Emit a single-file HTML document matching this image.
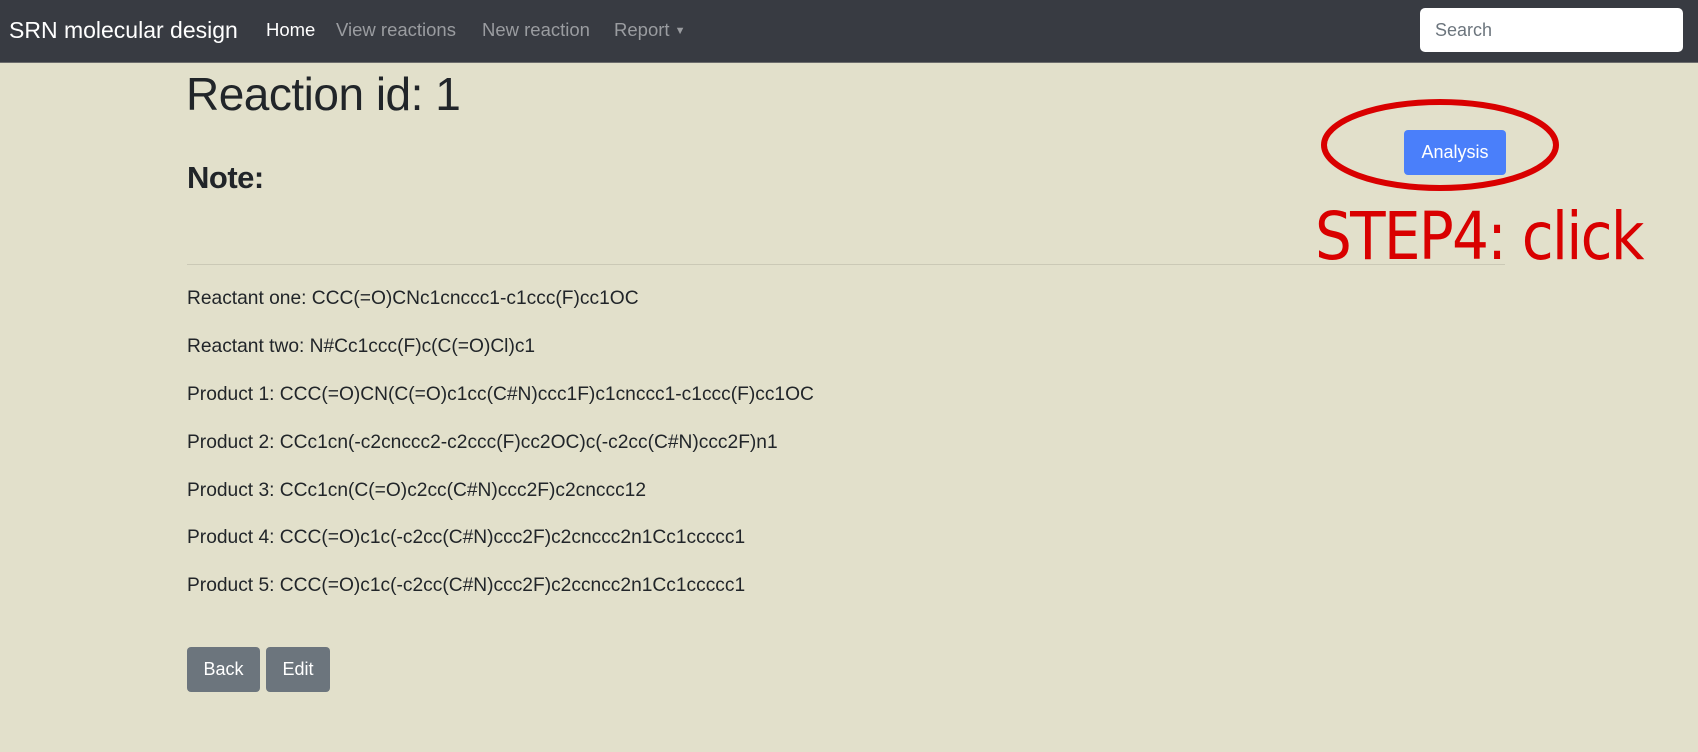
<!DOCTYPE html>
<html><head><meta charset="utf-8"><style>
*{margin:0;padding:0;box-sizing:border-box}
body{width:1698px;height:752px;background:#e2e0cb;font-family:"Liberation Sans",sans-serif;color:#212529;position:relative;overflow:hidden}
.nav{position:absolute;left:0;top:0;width:1698px;height:63px;background:#383b42;border-bottom:1px solid #6b6c6c}
.nav span{position:absolute;top:19px;font-size:18.5px;color:#9a9ca0}
.brand{left:9px;font-size:23px!important;color:#fff!important;top:17px!important}
.search{position:absolute;left:1420px;top:8px;width:263px;height:44px;background:#fff;border-radius:5px;font-size:18px;color:#6c757d;padding:12px 0 0 15px}
.abs{position:absolute}
h1{position:absolute;left:186px;top:67px;font-size:46px;font-weight:normal;letter-spacing:-0.5px}
h2{position:absolute;left:187px;top:160px;font-size:31px;font-weight:bold;letter-spacing:-0.5px}
.hr{position:absolute;left:187px;top:264px;width:1318px;height:1px;background:#cbc9b6}
.t{position:absolute;left:187px;font-size:19.2px}
.btn{position:absolute;top:647px;height:45px;background:#6c757d;color:#fff;border-radius:4px;font-size:18px;text-align:center;line-height:45px}
</style></head><body>
<div class="nav">
<span class="brand">SRN molecular design</span>
<span style="left:266px;color:#fff">Home</span>
<span style="left:336px">View reactions</span>
<span style="left:482px">New reaction</span>
<span style="left:614px">Report <span style="position:static;font-size:11px;vertical-align:2px">▼</span></span>
<div class="search">Search</div>
</div>
<h1>Reaction id: 1</h1>
<h2>Note:</h2>
<div class="abs" style="left:1404px;top:130px;width:102px;height:45px;background:#4a7ffa;border-radius:4px;color:#fff;font-size:18px;text-align:center;line-height:45px">Analysis</div>
<svg class="abs" style="left:1315px;top:95px" width="250" height="100"><ellipse cx="125" cy="50" rx="116" ry="43" fill="none" stroke="#d90000" stroke-width="6"/></svg>
<div class="abs" style="left:1315px;top:198px;font-size:66px;color:#d90000;font-family:'DejaVu Sans',sans-serif;letter-spacing:-2px;transform:scaleX(0.88);transform-origin:left">STEP4: click</div>
<div class="hr"></div>
<div class="t" style="top:288px">Reactant one: CCC(=O)CNc1cnccc1-c1ccc(F)cc1OC</div>
<div class="t" style="top:336px">Reactant two: N#Cc1ccc(F)c(C(=O)Cl)c1</div>
<div class="t" style="top:384px">Product 1: CCC(=O)CN(C(=O)c1cc(C#N)ccc1F)c1cnccc1-c1ccc(F)cc1OC</div>
<div class="t" style="top:432px">Product 2: CCc1cn(-c2cnccc2-c2ccc(F)cc2OC)c(-c2cc(C#N)ccc2F)n1</div>
<div class="t" style="top:480px">Product 3: CCc1cn(C(=O)c2cc(C#N)ccc2F)c2cnccc12</div>
<div class="t" style="top:527px">Product 4: CCC(=O)c1c(-c2cc(C#N)ccc2F)c2cnccc2n1Cc1ccccc1</div>
<div class="t" style="top:575px">Product 5: CCC(=O)c1c(-c2cc(C#N)ccc2F)c2ccncc2n1Cc1ccccc1</div>
<div class="btn" style="left:187px;width:73px">Back</div>
<div class="btn" style="left:266px;width:64px">Edit</div>
</body></html>
